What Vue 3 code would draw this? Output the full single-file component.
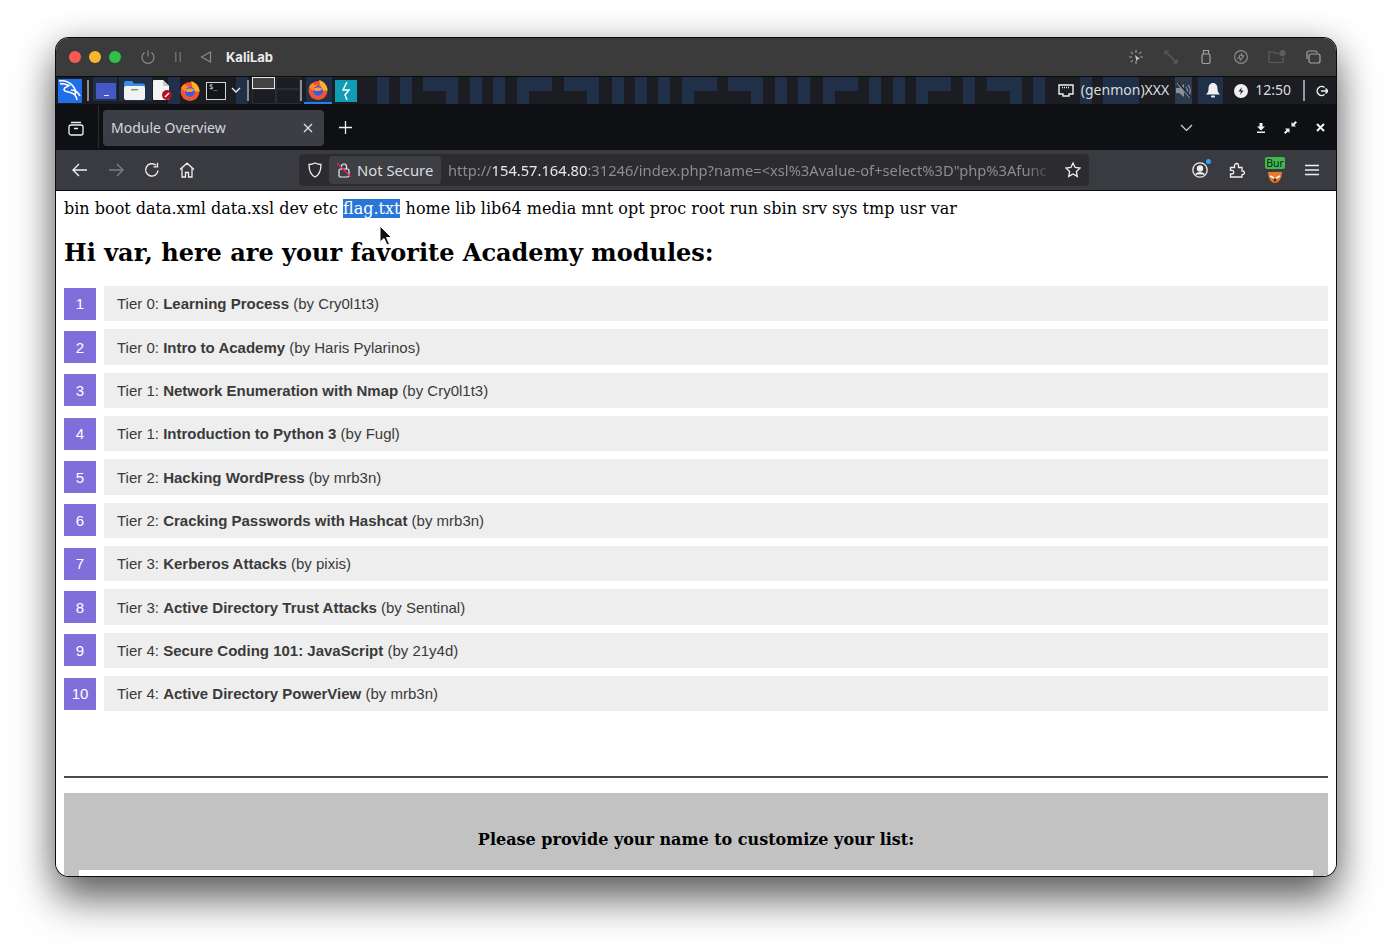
<script setup>
// modules shown on the page
const modules = [
  { tier: 0, name: 'Learning Process', by: 'Cry0l1t3' },
  { tier: 0, name: 'Intro to Academy', by: 'Haris Pylarinos' },
  { tier: 1, name: 'Network Enumeration with Nmap', by: 'Cry0l1t3' },
  { tier: 1, name: 'Introduction to Python 3', by: 'Fugl' },
  { tier: 2, name: 'Hacking WordPress', by: 'mrb3n' },
  { tier: 2, name: 'Cracking Passwords with Hashcat', by: 'mrb3n' },
  { tier: 3, name: 'Kerberos Attacks', by: 'pixis' },
  { tier: 3, name: 'Active Directory Trust Attacks', by: 'Sentinal' },
  { tier: 4, name: 'Secure Coding 101: JavaScript', by: '21y4d' },
  { tier: 4, name: 'Active Directory PowerView', by: 'mrb3n' }
]

// wallpaper blocks behind the panel, x positions relative to the window
const bars = [112, 180, 321, 344, 414, 437, 556, 579, 602, 719, 742, 813, 837, 907, 977, 1024]
const shapeA = [367, 508, 672, 931]
const shapeB = [461, 626, 767, 860]
</script>

<template>
  <div class="page">
    <div class="window">
      <div class="titlebar">
        <span class="light red"></span>
        <span class="light amber"></span>
        <span class="light green"></span>
        <svg class="tb-power" width="16" height="16" viewBox="0 0 16 16" fill="none" stroke="#8a8a8a" stroke-width="1.2"><path d="M8 1.5v6"/><path d="M4.6 3.4a6 6 0 1 0 6.8 0"/></svg>
        <svg class="tb-pause" width="10" height="12" viewBox="0 0 10 12" fill="#6e6e6e"><rect x="2" y="1" width="1.5" height="10"/><rect x="6.5" y="1" width="1.5" height="10"/></svg>
        <svg class="tb-back" width="12" height="12" viewBox="0 0 12 12" fill="none" stroke="#8a8a8a" stroke-width="1.2"><path d="M10.5 1v10L1.5 6z"/></svg>
        <span class="vm-name">KaliLab</span>
        <div class="tb-right">
          <svg width="16" height="16" viewBox="0 0 16 16" fill="none" stroke="#9a9a9a" stroke-width="1.2"><path d="M8 1v3M8 12v3M1 8h3M2.8 2.8l2 2M13.2 2.8l-2 2M2.8 13.2l2-2M15 8h-3"/><path d="M7 6l5 4-2.4.3-1 2.2z" fill="#ccc" stroke="none"/></svg>
          <svg width="16" height="16" viewBox="0 0 16 16" fill="none" stroke="#5e5e5e" stroke-width="1.2"><path d="M2 2l12 12M2 2v4M2 2h4M14 14v-4M14 14h-4"/></svg>
          <svg width="16" height="16" viewBox="0 0 16 16" fill="none" stroke="#a4a4a4" stroke-width="1.2"><rect x="4" y="5" width="8" height="9.5" rx="1.5"/><path d="M5.5 5V1.5h5V5"/></svg>
          <svg width="16" height="16" viewBox="0 0 16 16" fill="none" stroke="#8a8a8a" stroke-width="1.2"><circle cx="8" cy="8" r="6.4"/><circle cx="8" cy="8" r="1.8"/><path d="M4.5 9.5l2-1M11.5 6.5l-2 1M9 3.8l-.6 2.4M7 12.2l.6-2.4"/></svg>
          <svg width="18" height="16" viewBox="0 0 18 16" fill="none" stroke="#5e5e5e" stroke-width="1.2"><path d="M1 13.5V3h5l1.5 1.5H12M1 13.5h14V8"/><circle cx="14.5" cy="4" r="2.5" fill="#5e5e5e"/></svg>
          <svg width="16" height="16" viewBox="0 0 16 16" fill="none" stroke="#a4a4a4" stroke-width="1.2"><rect x="4" y="5" width="11" height="9" rx="2"/><path d="M2 10V4a2 2 0 0 1 2-2h6a2 2 0 0 1 2 2"/></svg>
        </div>
      </div>

      <div class="panel">
        <svg class="wallpaper" width="1280" height="27">
          <rect v-for="x in bars" :key="x" :x="x" y="0" width="12" height="27" fill="#1f3048"/>
          <path v-for="x in shapeA" :key="'a' + x" :d="`M${x} 0h35v27h-12V14H${x}z`" fill="#1f3048"/>
          <path v-for="x in shapeB" :key="'b' + x" :d="`M${x} 0h35v14H${x + 12}v13H${x}z`" fill="#1f3048"/>
          <rect x="37" y="0" width="24" height="24" fill="#1f3048"/>
          <rect x="63" y="0" width="33" height="24" fill="#1f3048"/>
          <rect x="250" y="0" width="26" height="25" fill="#1f3048"/>
          <rect x="1047" y="0" width="36" height="27" fill="#1f3048"/>
          <rect x="1119" y="0" width="17" height="27" fill="#2c3a4e"/>
          <rect x="1142" y="0" width="25" height="27" fill="#1f3048"/>
        </svg>

        <div class="panel-left">
          <span class="kali">
            <svg width="24" height="24" viewBox="0 0 24 24" fill="none" stroke="#fff" stroke-width="1.6"><path d="M1 2c5-1 10 1 13 4 3 3 4 7 3 10"/><path d="M2 5c3-.5 6 0 9 1.5-2 1.5-5 1.500-5 4 0 3 8 2 11 5.500 1 1.500 2 3 2 5"/><path d="M13 11c4 0 7 2 9 6"/></svg>
          </span>
          <span class="psep sep1"></span>
          <svg class="pi desktop" width="20" height="16" viewBox="0 0 20 16"><rect width="20" height="16" rx="1" fill="#4558c4"/><rect x="8" y="12" width="5" height="1" fill="#dfe4ff"/></svg>
          <svg class="pi files" width="21" height="19" viewBox="0 0 21 19"><path d="M0 2a2 2 0 0 1 2-2h6l2 2.5h9a2 2 0 0 1 2 2V6H0z" fill="#3a8ee6"/><rect y="5" width="21" height="14" rx="2" fill="#f2f2f2"/><rect x="7" y="8" width="7" height="1.4" fill="#888"/></svg>
          <svg class="pi doc" width="20" height="21" viewBox="0 0 20 21"><path d="M0 1a1 1 0 0 1 1-1h9l6 6v14H1a1 1 0 0 1-1-1z" fill="#f4f4f4"/><path d="M10 0l6 6h-6z" fill="#c9c9c9"/><circle cx="14" cy="15" r="5" fill="#b31222"/><path d="M12 17l4-4" stroke="#fff" stroke-width="1.4"/></svg>
          <svg class="pi fox" width="20" height="21" viewBox="0 0 20 21"><use href="#fox-icon"/></svg>
          <span class="term">$_</span>
          <svg class="pi chev" width="10" height="7" viewBox="0 0 10 7" fill="none" stroke="#e8e8e8" stroke-width="1.4"><path d="M1 1l4 4 4-4"/></svg>
          <span class="psep sep2"></span>
          <div class="pager">
            <span class="pager-cell active"></span>
            <span class="pager-cell"></span>
            <span class="pager-cell"></span>
            <span class="pager-cell"></span>
          </div>
          <span class="psep sep3"></span>
          <span class="task">
            <svg width="20" height="21" viewBox="0 0 20 21"><use href="#fox-icon"/></svg>
          </span>
          <span class="thunder">
            <svg width="12" height="18" viewBox="0 0 12 18" fill="none" stroke="#fff" stroke-width="1.5"><path d="M7 0L3 8h6l-4 5 2 5"/></svg>
          </span>
        </div>

        <div class="panel-right">
          <svg class="net" width="16" height="14" viewBox="0 0 16 14" fill="none" stroke="#eee" stroke-width="1.4"><path d="M1 1h14v9h-4v2H5v-2H1z"/><path d="M4 3.5h8" stroke-dasharray="1 1"/></svg>
          <span class="genmon">(genmon)XXX</span>
          <svg class="mute" width="17" height="17" viewBox="0 0 17 17"><path d="M1 6h3l5-4v13l-5-4H1z" fill="#8a9098"/><path d="M11 5c1.5 2 1.5 5 0 7M13 3c3 3 3 8 0 11" stroke="#8a9098" fill="none" stroke-width="1.2"/><path d="M3 1l13 15" stroke="#1b1d23" stroke-width="2"/><path d="M2 1l13 15" stroke="#8a9098" stroke-width="1.1"/></svg>
          <svg class="bell" width="14" height="15" viewBox="0 0 14 15" fill="#f0f0f0"><path d="M7 0c3 0 4.5 2.5 4.5 5.500 0 3 .8 4.500 2.500 6H0c1.700-1.500 2.500-3 2.500-6C2.500 2.500 4 0 7 0z"/><rect x="5" y="12.500" width="4" height="2" rx="1"/></svg>
          <svg class="clock" width="14" height="14" viewBox="0 0 14 14"><circle cx="7" cy="7" r="7" fill="#f0f0f0"/><path d="M8 3L4.500 7.500H7L6 11l3.500-4.500H7z" fill="#1a1c22"/></svg>
          <span class="time">12:50</span>
          <span class="psep sep4"></span>
          <svg class="logout" width="12" height="12" viewBox="0 0 12 12" fill="none" stroke="#eee" stroke-width="1.5"><path d="M8.500 2.500a4.500 4.500 0 1 0 0 7"/><path d="M5 6h7M9.500 3.500L12 6 9.500 8.500"/></svg>
        </div>
      </div>

      <div class="tabbar">
        <svg class="tabs-icon" width="16" height="16" viewBox="0 0 16 16" fill="none" stroke="#f0f0f0" stroke-width="1.3"><rect x="1" y="5" width="14" height="10" rx="2"/><path d="M3 2.500h10M6 8.500h4"/></svg>
        <span class="tabsep"></span>
        <div class="tab">
          <span class="tab-title">Module Overview</span>
          <svg width="10" height="10" viewBox="0 0 10 10" stroke="#e0e0e0" stroke-width="1.3"><path d="M1 1l8 8M9 1l-8 8"/></svg>
        </div>
        <svg class="plus" width="13" height="13" viewBox="0 0 13 13" stroke="#f0f0f0" stroke-width="1.3"><path d="M6.500 0v13M0 6.500h13"/></svg>
        <svg class="list-all" width="13" height="8" viewBox="0 0 13 8" fill="none" stroke="#d8d8d8" stroke-width="1.2"><path d="M1 1l5.500 5.500L12 1"/></svg>
        <svg class="win-min" width="10" height="10" viewBox="0 0 10 10" fill="#f0f0f0"><path d="M3.500 0h3v3.500H9L5 7.500 1 3.500h2.500zM1 8.500h8V10H1z"/></svg>
        <svg class="win-max" width="13" height="13" viewBox="0 0 13 13" fill="#f0f0f0"><path d="M7.500 5.500V1l1.500 1.500L11.500 0 13 1.500 10.500 4 12 5.500zM5.500 7.500V12L4 10.500 1.500 13 0 11.500 2.500 9 1 7.500z"/></svg>
        <svg class="win-close" width="9" height="9" viewBox="0 0 9 9" stroke="#f4f4f4" stroke-width="2"><path d="M1 1l7 7M8 1L1 8"/></svg>
      </div>

      <div class="navbar">
        <svg class="nav-back" width="16" height="14" viewBox="0 0 16 14" fill="none" stroke="#f0f0f0" stroke-width="1.4"><path d="M15 7H1.500M7 1L1 7l6 6"/></svg>
        <svg class="nav-fwd" width="16" height="14" viewBox="0 0 16 14" fill="none" stroke="#7d7e83" stroke-width="1.4"><path d="M1 7h13.500M9 1l6 6-6 6"/></svg>
        <svg class="nav-reload" width="16" height="16" viewBox="0 0 16 16" fill="none" stroke="#f0f0f0" stroke-width="1.4"><path d="M14 8.500A6.200 6.200 0 1 1 12 3.300"/><path d="M13.500 .8v4h-4" stroke-width="1.3"/></svg>
        <svg class="nav-home" width="16" height="16" viewBox="0 0 16 16" fill="none" stroke="#f0f0f0" stroke-width="1.3"><path d="M1 7.500L8 1.200l7 6.300M3 6v9h3.500v-4.500h3V15H13V6"/></svg>

        <div class="urlbar">
          <svg class="shield" width="14" height="16" viewBox="0 0 14 16" fill="none" stroke="#eee" stroke-width="1.3"><path d="M7 1c2 1 4 1.500 6 1.500 0 6-1 10-6 12.500C2 12.500 1 8.500 1 2.500 3 2.500 5 2 7 1z"/></svg>
          <div class="chip">
            <svg width="14" height="16" viewBox="0 0 14 16" fill="none"><rect x="2" y="7" width="10" height="8" rx="1.5" stroke="#eee" stroke-width="1.2"/><path d="M4.500 7V4.500a2.500 2.500 0 0 1 5 0V7" stroke="#eee" stroke-width="1.2"/><path d="M0 1l14 14" stroke="#e22850" stroke-width="1.3"/></svg>
            <span>Not Secure</span>
          </div>
          <div class="url"><span class="dim">http://</span>154.57.164.80<span class="dim">:31246/index.php?name=&lt;xsl%3Avalue-of+select%3D"php%3Afunc</span></div>
          <svg class="star" width="16" height="16" viewBox="0 0 16 16" fill="none" stroke="#f0f0f0" stroke-width="1.3"><path d="M8 1l2.100 4.500 4.900.6-3.600 3.400.9 4.900L8 12l-4.300 2.400.9-4.900L1 6.100l4.900-.6z"/></svg>
        </div>

        <span class="account">
          <svg width="16" height="16" viewBox="0 0 16 16" fill="none" stroke="#f0f0f0" stroke-width="1.3"><circle cx="8" cy="8" r="7.2"/><circle cx="8" cy="6.500" r="2.500" fill="#f0f0f0"/><path d="M3.500 12.500c2-2.500 7-2.500 9 0" fill="#f0f0f0"/></svg>
          <span class="dot"></span>
        </span>
        <svg class="ext" width="16" height="16" viewBox="0 0 16 16" fill="none" stroke="#f0f0f0" stroke-width="1.3"><path d="M1.500 5.500h4v-2a2 2 0 0 1 4 0v2H13V9h.6a1.800 1.800 0 0 1 0 3.600H13V15H1.500v-3H3a1.800 1.800 0 0 0 0-3.600H1.500z"/></svg>
        <span class="burp">
          <svg class="burp-fox" width="14" height="12" viewBox="0 0 14 12"><path d="M0 1h14c0 6-3 11-7 11S0 7 0 1z" fill="#e6792a"/><path d="M2 5l4 2M12 5L8 7" stroke="#fff" stroke-width="1.5"/><circle cx="7" cy="9" r="1.500" fill="#5a2c10"/></svg>
          <span class="burp-tag">Bur</span>
        </span>
        <svg class="menu" width="14" height="12" viewBox="0 0 14 12" stroke="#f0f0f0" stroke-width="1.3"><path d="M0 1.500h14M0 6h14M0 10.500h14"/></svg>
      </div>

      <div class="content">
        <p class="listing">bin boot data.xml data.xsl dev etc <span class="sel">flag.txt</span> home lib lib64 media mnt opt proc root run sbin srv sys tmp usr var</p>
        <h1 class="greeting">Hi var, here are your favorite Academy modules:</h1>

        <ol class="modules">
          <li v-for="(m, i) in modules" :key="m.name" class="module">
            <span class="num">{{ i + 1 }}</span>
            <span class="module-text">Tier {{ m.tier }}: <b>{{ m.name }}</b> (by {{ m.by }})</span>
          </li>
        </ol>

        <hr class="rule" />

        <div class="form-box">
          <p class="form-title">Please provide your name to customize your list:</p>
          <div class="name-input"></div>
        </div>

        <svg class="cursor" width="14" height="22" viewBox="0 0 14 22"><path d="M1 1v16l4-3.500 3 6.500 2.500-1-3-6.500H12.500z" fill="#111" stroke="#fff" stroke-width="1"/></svg>
      </div>

      <svg class="defs" width="0" height="0">
        <defs>
          <radialGradient id="fox-glow" cx="50%" cy="50%" r="55%">
            <stop offset="0" stop-color="#5a3fd6"/>
            <stop offset="1" stop-color="#2f6fe0"/>
          </radialGradient>
          <symbol id="fox-icon" viewBox="0 0 20 21">
            <circle cx="10" cy="11.500" r="9.500" fill="#f2542d"/>
            <path d="M11 1c4 1 8.500 5 8.500 10.500h-6z" fill="#ffb02e"/>
            <path d="M1 8c1-2 3-4 4-4 0 2 2 2 4 2l-4 6z" fill="#ff8a2a"/>
            <circle cx="10" cy="12" r="5" fill="url(#fox-glow)"/>
            <path d="M5 10c3-2 7-2 9.500 0l-3 2H7z" fill="#ff9a2e"/>
          </symbol>
        </defs>
      </svg>
    </div>
  </div>
</template>

<style scoped>
.page {
  width: 1392px;
  height: 950px;
  padding: 38px 56px 0;
  box-sizing: border-box;
  overflow: hidden;
  background: #fff;
}

.window {
  position: relative;
  width: 1280px;
  height: 838px;
  display: flex;
  flex-direction: column;
  border-radius: 13px;
  font-family: "Noto Sans", sans-serif;
  box-shadow: 0 0 0 1px #0c0c0c, 0 24px 42px rgba(0, 0, 0, 0.55), 0 4px 34px rgba(0, 0, 0, 0.25);
}

.titlebar {
  height: 39px;
  flex: none;
  display: flex;
  align-items: center;
  padding-left: 13px;
  box-sizing: border-box;
  background: #3b3b3b;
  border-bottom: 1px solid #0a0a0a;
  border-radius: 13px 13px 0 0;
}

.light {
  width: 12px;
  height: 12px;
  border-radius: 50%;
  margin-right: 8px;
}

.red { background: #fb5a53; }
.amber { background: #f9b52f; }
.green { background: #2fc246; }

.tb-power { margin-left: 11px; }
.tb-pause { margin-left: 17px; }
.tb-back { margin-left: 17px; }

.vm-name {
  margin-left: 14px;
  font-family: "Inter", sans-serif;
  font-size: 13px;
  font-weight: 700;
  color: #ececec;
}

.tb-right {
  margin-left: auto;
  margin-right: 15px;
  display: flex;
  align-items: center;
  gap: 19px;
}

.panel {
  position: relative;
  height: 28px;
  flex: none;
  display: flex;
  justify-content: space-between;
  align-items: flex-start;
  background: #1b1d23;
  border-bottom: 1px solid #0f1014;
  box-sizing: border-box;
}

.wallpaper {
  position: absolute;
  left: 0;
  top: 0;
}

.panel-left,
.panel-right {
  position: relative;
  display: flex;
  align-items: center;
  height: 27px;
}

.panel-left { padding-left: 2px; }

.kali {
  width: 24px;
  height: 24px;
  background: #1f6fe8;
  display: block;
}

.kali svg { display: block; }

.psep {
  width: 2px;
  height: 21px;
  background: #8a8d92;
}

.sep1 { margin-left: 5px; }
.pi { flex: none; }
.desktop { margin-left: 7px; }
.files { margin-left: 8px; }
.doc { margin-left: 8px; }
.fox { margin-left: 7px; }

.term {
  width: 20px;
  height: 18px;
  margin-left: 6px;
  box-sizing: border-box;
  border: 1px solid #d8d8d8;
  background: #14151a;
  color: #eee;
  font-family: "DejaVu Sans Mono", monospace;
  font-size: 7px;
  line-height: 9px;
  padding-left: 2px;
}

.chev { margin-left: 5px; }
.sep2 { margin-left: 6px; }

.pager {
  width: 48px;
  height: 27px;
  margin-left: 3px;
  display: grid;
  grid-template-columns: 1fr 1fr;
  grid-template-rows: 12px 15px;
}

.pager-cell {
  border: 1px solid #2a2d33;
  background: #1b1d23;
}

.pager-cell.active {
  border: 1px solid #e8e8e8;
  background: #444;
  width: 21px;
}

.task {
  width: 28px;
  height: 27px;
  margin-left: 2px;
  display: flex;
  align-items: center;
  justify-content: center;
  box-sizing: border-box;
  border-bottom: 2px solid #2f7ce8;
}

.thunder {
  width: 22px;
  height: 22px;
  margin-left: 3px;
  background: #0f9cb4;
  display: flex;
  align-items: center;
  justify-content: center;
}

.panel-right { padding-right: 8px; }
.genmon, .time {
  font-size: 14px;
  color: #dcdcdc;
  margin-top: -2px;
}

.genmon { margin-left: 7px; }
.mute { margin-left: 6px; }
.bell { margin-left: 14px; }
.clock { margin-left: 14px; }
.time { margin-left: 7px; }

.sep4 {
  margin-left: 12px;
  background: #9a9a9a;
}

.logout { margin-left: 11px; }

.tabbar {
  height: 45px;
  flex: none;
  display: flex;
  align-items: center;
  background: #0f1014;
}

.tabs-icon { margin-left: 12px; }

.tabsep {
  width: 1px;
  height: 43px;
  margin-left: 14px;
  background: #2c2d31;
  align-self: flex-start;
}

.tab {
  width: 221px;
  height: 36px;
  margin-left: 4px;
  padding: 0 11px 0 8px;
  box-sizing: border-box;
  display: flex;
  align-items: center;
  justify-content: space-between;
  background: #3d3e45;
  border-radius: 4px;
}

.tab-title {
  font-size: 14px;
  color: #d6d6d8;
}

.plus { margin-left: 15px; }
.list-all { margin-left: 828px; }
.win-min { margin-left: 63px; }
.win-max { margin-left: 18px; }
.win-close { margin-left: 19px; }

.navbar {
  height: 41px;
  flex: none;
  display: flex;
  align-items: center;
  background: #3a3b41;
  border-bottom: 1px solid #0a0a0a;
  box-sizing: border-box;
}

.nav-back { margin-left: 16px; }
.nav-fwd { margin-left: 20px; }
.nav-reload { margin-left: 20px; }
.nav-home { margin-left: 19px; }

.urlbar {
  width: 790px;
  height: 32px;
  margin-left: 104px;
  padding: 0 8px 0 9px;
  box-sizing: border-box;
  display: flex;
  align-items: center;
  background: #2b2b30;
  border-radius: 4px;
}

.chip {
  height: 28px;
  width: 112px;
  margin-left: 7px;
  padding-left: 8px;
  box-sizing: border-box;
  flex: none;
  display: flex;
  align-items: center;
  gap: 6px;
  background: #3e3f45;
  border-radius: 4px;
  font-size: 14.8px;
  color: #dcdcdc;
}

.url {
  flex: 1;
  margin: 0 9px 0 7px;
  font-size: 14.7px;
  color: #e8e8e8;
  white-space: nowrap;
  -webkit-mask-image: linear-gradient(to right, #000 95%, transparent);
  mask-image: linear-gradient(to right, #000 95%, transparent);
}

.dim { color: #8c8d91; }
.star { flex: none; }

.account {
  position: relative;
  margin-left: 103px;
  height: 16px;
}

.account svg { display: block; }

.dot {
  position: absolute;
  right: -3px;
  top: -3px;
  width: 5px;
  height: 5px;
  border-radius: 50%;
  background: #2aa3f5;
}

.ext { margin-left: 21px; }

.burp {
  position: relative;
  width: 20px;
  height: 26px;
  margin-left: 20px;
  display: flex;
  justify-content: center;
  align-items: flex-end;
}

.burp-tag {
  position: absolute;
  left: 0;
  top: 0;
  width: 20px;
  height: 12px;
  background: #3fb94f;
  border-radius: 2px;
  font-size: 10.5px;
  line-height: 12px;
  color: #10240f;
  text-align: center;
}

.menu { margin-left: 20px; }

.content {
  position: relative;
  flex: 1;
  min-height: 0;
  overflow: hidden;
  background: #fff;
  padding: 8px 8px 0;
  box-sizing: border-box;
  font-family: "DejaVu Serif", serif;
  color: #000;
  border-radius: 0 0 13px 13px;
}

.listing {
  margin: 0;
  font-size: 16px;
  line-height: 19px;
  white-space: nowrap;
}

.sel {
  background: #2a76d6;
  color: #fff;
}

.greeting {
  margin: 21px 0 19.1px;
  font-size: 24px;
  line-height: 28px;
  font-weight: 700;
}

.modules {
  margin: 0;
  padding: 0;
  list-style: none;
  font-family: "Liberation Sans", sans-serif;
  font-size: 15px;
}

.module {
  height: 35.33px;
  margin-bottom: 8px;
  display: flex;
  align-items: center;
  gap: 8px;
}

.num {
  width: 32px;
  height: 32px;
  flex: none;
  display: flex;
  align-items: center;
  justify-content: center;
  background: #806fdb;
  color: #fff;
}

.module-text {
  flex: 1;
  height: 100%;
  padding-left: 13px;
  display: flex;
  align-items: center;
  white-space: pre;
  background: #eee;
  color: #3a3a3a;
}

.rule {
  margin: 64.9px 0 15px;
  height: 2px;
  border: 0;
  background: #4a4a4a;
}

.form-box {
  background: #c2c2c2;
  padding: 0 15px;
  height: 120px;
}

.form-title {
  margin: 0;
  padding-top: 37px;
  height: 77px;
  box-sizing: border-box;
  text-align: center;
  font-size: 16px;
  line-height: 19px;
  font-weight: 700;
}

.name-input {
  height: 40px;
  background: #fff;
}

.cursor {
  position: absolute;
  left: 323px;
  top: 34px;
}

.defs {
  position: absolute;
}
</style>

<style>
body { background: #fff; }
</style>
